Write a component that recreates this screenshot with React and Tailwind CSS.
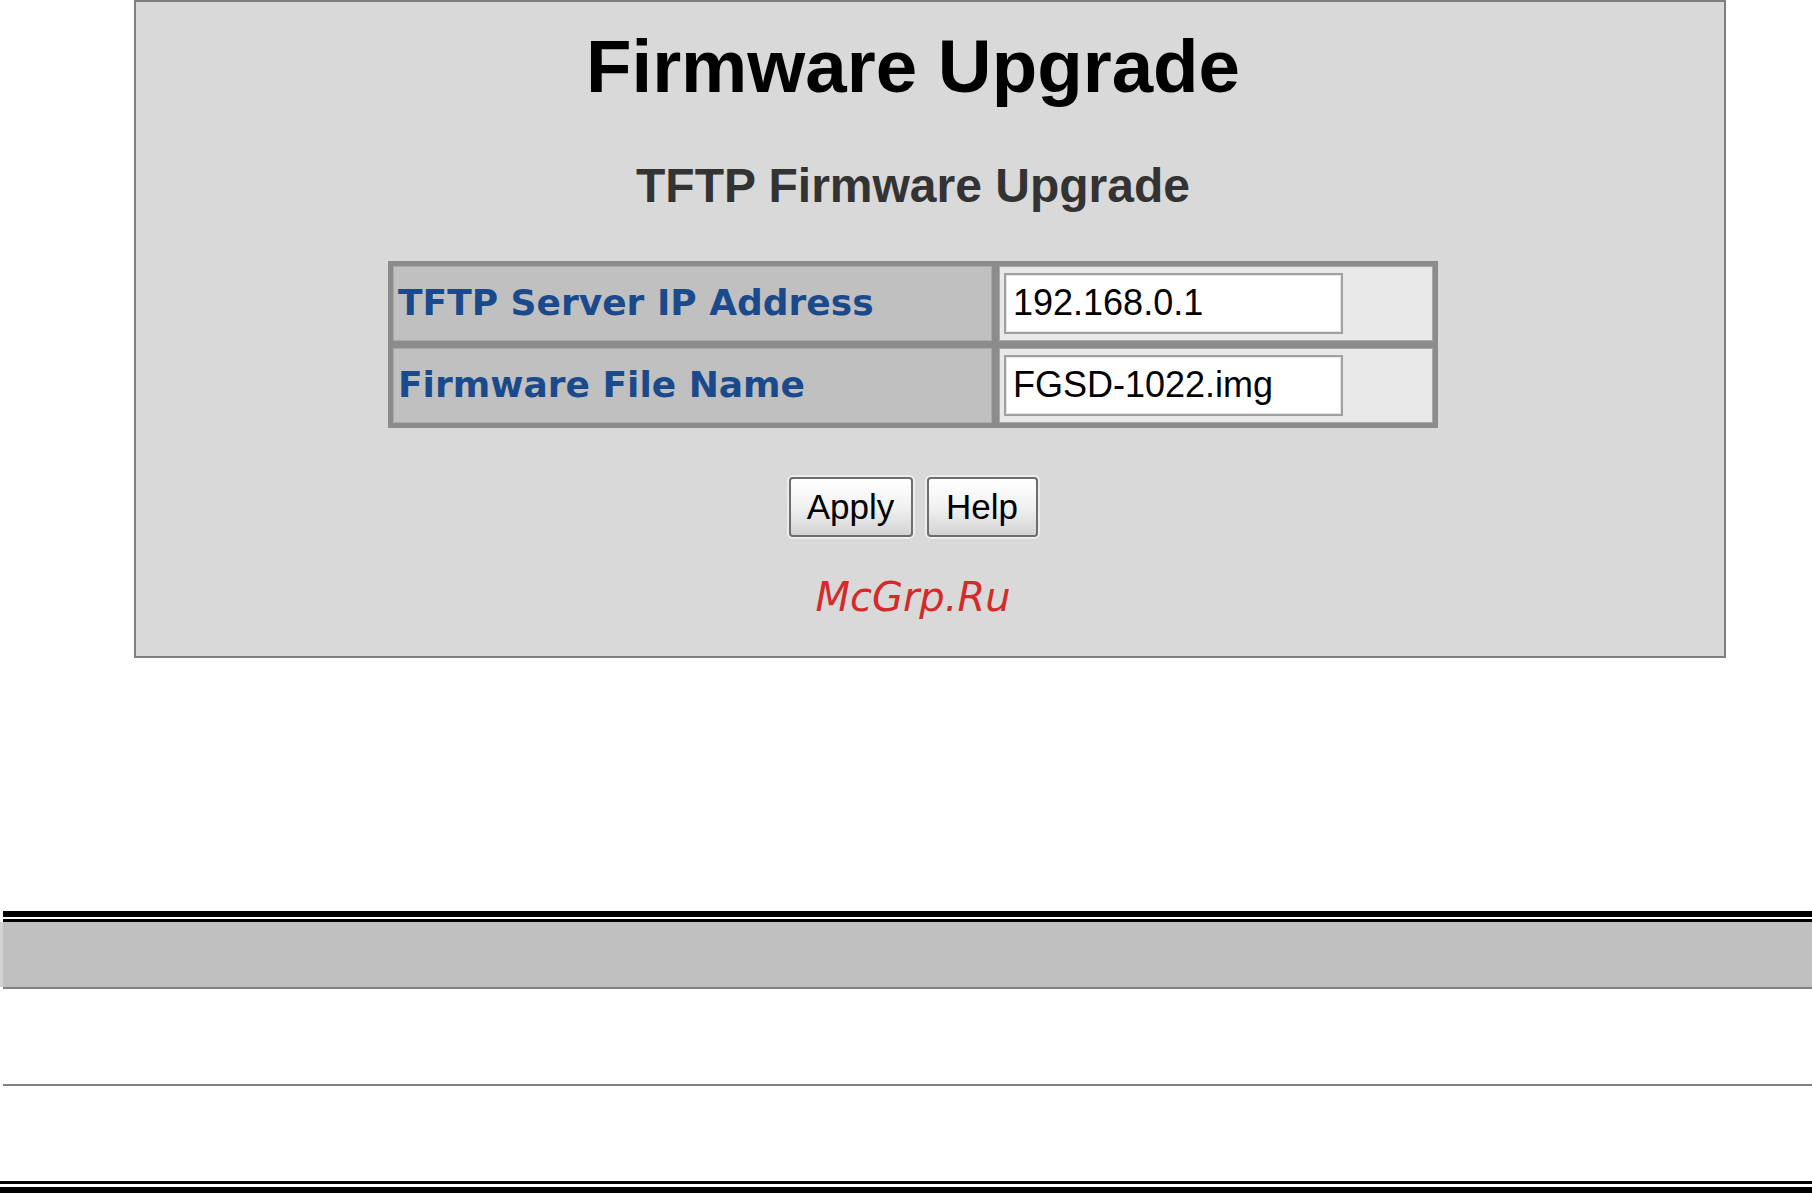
import React from "react";

function Field({ label, value }) {
  return (
    <>
      <div className="flex items-center bg-[#c0c0c0] pl-[5px] shadow-[inset_0_0_0_1px_#a9a9a9]">
        <span className="font-['DejaVu_Sans',Verdana,sans-serif] text-[36px] font-bold leading-none text-[#1a4a8c] whitespace-nowrap">
          {label}
        </span>
      </div>
      <div className="flex items-center bg-[#e9e9e9] pl-[5px] shadow-[inset_0_0_0_1px_#a9a9a9]">
        <input
          readOnly
          value={value}
          className="h-[61px] w-[339px] border-2 border-[#a0a0a0] bg-white pl-[7px] font-['Liberation_Sans',Arial,sans-serif] text-[36px] leading-none text-black outline-none shadow-[inset_0_0_0_1px_#e6e6e6]"
        />
      </div>
    </>
  );
}

function Btn({ children, w }) {
  return (
    <button
      type="button"
      className={`${w} h-[60px] rounded-[4px] border-2 border-[#6e6e6e] bg-linear-to-b from-white via-[#f1f1f1] to-[#d3d3d3] font-['Liberation_Sans',Arial,sans-serif] text-[35px] leading-none text-black shadow-[0_0_0_2px_#ededed]`}
    >
      {children}
    </button>
  );
}

export default function App() {
  return (
    <div className="relative h-[1193px] w-[1812px] overflow-hidden bg-white">
      <div className="ml-[134px] h-[658px] w-[1592px] border-2 border-[#808080] bg-[#d9d9d9]">
        <div className="flex flex-col items-center pr-[34px] pt-[28px]">
          <h1 className="font-['Liberation_Sans',Arial,sans-serif] text-[74.5px] font-bold leading-none text-black">
            Firmware Upgrade
          </h1>
          <h2 className="mt-[57px] font-['Liberation_Sans',Arial,sans-serif] text-[48px] font-bold leading-none text-[#333333]">
            TFTP Firmware Upgrade
          </h2>
          <div className="mt-[51px] bg-[#8c8c8c] p-[5px]">
            <div className="grid grid-cols-[599px_434px] grid-rows-[75px_75px] gap-[7px]">
              <Field label="TFTP Server IP Address" value="192.168.0.1" />
              <Field label="Firmware File Name" value="FGSD-1022.img" />
            </div>
          </div>
          <div className="mt-[49px] flex gap-[14px]">
            <Btn w="w-[124px]">Apply</Btn>
            <Btn w="w-[111px]">Help</Btn>
          </div>
          <div className="mt-[40px] font-['DejaVu_Sans',Verdana,sans-serif] text-[40px] italic leading-none text-[#d42a2a]">
            McGrp.Ru
          </div>
        </div>
      </div>

      <div className="mt-[253px]">
        <div className="ml-[3px] h-[6px] bg-black" />
        <div className="h-[2px]" />
        <div className="ml-[3px] h-[3px] bg-black" />
        <div className="h-[65px] border-l-[3px] border-[#d2d2d2] bg-[#c0c0c0]" />
        <div className="ml-[3px] h-[2px] bg-[#808080]" />
        <div className="h-[95px]" />
        <div className="ml-[3px] h-[2px] bg-[#808080]" />
        <div className="h-[95px]" />
        <div className="h-[3px] bg-black" />
        <div className="h-[3px]" />
        <div className="h-[6px] bg-black" />
      </div>
    </div>
  );
}
